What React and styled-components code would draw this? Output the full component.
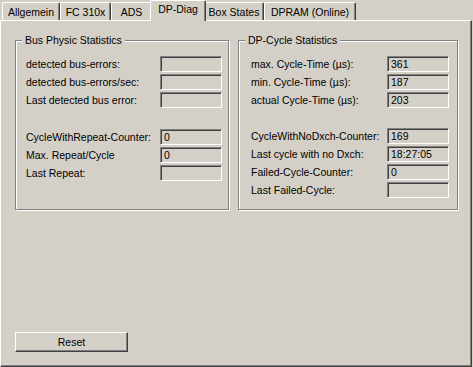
import React from 'react';
import styled, { createGlobalStyle } from 'styled-components';

const Global = createGlobalStyle`
  html, body { margin: 0; padding: 0; background: #d4d0c8; }
  body {
    font-family: "Liberation Sans", Arial, sans-serif;
    font-size: 10.5px;
    color: #000;
  }
`;

const Window = styled.div`
  width: 473px;
  height: 367px;
  display: flex;
  flex-direction: column;
  background: #d4d0c8;
`;

const TabStrip = styled.div`
  display: flex;
  align-items: flex-end;
  height: 20px;
  padding-left: 2px;
  position: relative;
  z-index: 1;
`;

const Tab = styled.div`
  box-sizing: border-box;
  flex: none;
  width: ${(p) => p.$w + (p.$active ? 4 : 0)}px;
  height: ${(p) => (p.$active ? '21px' : '18px')};
  margin: ${(p) => (p.$active ? '0 -2px -1px' : '0')};
  padding-top: ${(p) => (p.$active ? '1px' : '2px')};
  text-align: center;
  border-top: 1px solid #fff;
  border-left: 1px solid #fff;
  border-right: 1px solid #404040;
  box-shadow: inset -1px 0 #808080;
  border-radius: 2px 2px 0 0;
  background: #d4d0c8;
  line-height: 14px;
  white-space: nowrap;
  position: relative;
  z-index: ${(p) => (p.$active ? 2 : 1)};
`;

const Panel = styled.div`
  flex: 1;
  width: 472px;
  box-sizing: border-box;
  border-top: 1px solid #fff;
  border-left: 1px solid #fff;
  border-right: 1px solid #404040;
  border-bottom: 1px solid #404040;
  box-shadow: inset -1px -1px #808080;
  padding: 19px 0 0 14px;
  display: flex;
  flex-direction: column;
`;

const Groups = styled.div`
  display: flex;
  gap: 9px;
  align-items: flex-start;
`;

const Group = styled.div`
  position: relative;
  box-sizing: border-box;
  width: ${(p) => p.$w}px;
  height: 170px;
  border: 1px solid #808080;
  box-shadow: inset 1px 1px #fff, 1px 1px #fff;
  padding: 15px 0 0 ${(p) => p.$pl}px;
`;

const Legend = styled.div`
  position: absolute;
  top: -7px;
  left: 6px;
  padding: 0 3px;
  background: #d4d0c8;
  line-height: 13px;
  white-space: nowrap;
`;

const Fields = styled.div`
  display: grid;
  grid-template-columns: ${(p) => p.$label}px 62px;
  row-gap: 2px;
`;

const Label = styled.div`
  line-height: 16px;
  height: 16px;
  white-space: nowrap;
`;

const Field = styled.div`
  box-sizing: border-box;
  width: 62px;
  height: 16px;
  border: 1px solid;
  border-color: #808080 #fff #fff #808080;
  box-shadow: inset 1px 1px #404040, inset -1px -1px #d4d0c8;
  background: #d4d0c8;
  padding-left: 3px;
  line-height: 15px;
  white-space: nowrap;
  overflow: hidden;
`;

const Spacer = styled.div`
  grid-column: 1 / -1;
  height: ${(p) => p.$h}px;
`;

const Button = styled.button`
  box-sizing: border-box;
  margin-top: 122px;
  width: 113px;
  height: 20px;
  padding: 0;
  border: 1px solid;
  border-color: #fff #404040 #404040 #fff;
  box-shadow: inset -1px -1px #808080;
  background: #d4d0c8;
  font-family: "Liberation Sans", Arial, sans-serif;
  font-size: 10.5px;
  color: #000;
  line-height: 16px;
`;

const tabs = [
  ['Allgemein', 58],
  ['FC 310x', 51],
  ['ADS', 41],
  ['DP-Diag', 52],
  ['Box States', 60],
  ['DPRAM (Online)', 92],
];

const left = [
  [['detected bus-errors:', ''], ['detected bus-errors/sec:', ''], ['Last detected bus error:', '']],
  [['CycleWithRepeat-Counter:', '0'], ['Max. Repeat/Cycle', '0'], ['Last Repeat:', '']],
];

const right = [
  [['max. Cycle-Time (µs):', '361'], ['min. Cycle-Time (µs):', '187'], ['actual Cycle-Time (µs):', '203']],
  [
    ['CycleWithNoDxch-Counter:', '169'],
    ['Last cycle with no Dxch:', '18:27:05'],
    ['Failed-Cycle-Counter:', '0'],
    ['Last Failed-Cycle:', ''],
  ],
];

function Block({ rows }) {
  return rows.map(([l, v]) => (
    <React.Fragment key={l}>
      <Label>{l}</Label>
      <Field>{v}</Field>
    </React.Fragment>
  ));
}

function StatGroup({ title, w, pl, labelW, blocks, spacer }) {
  return (
    <Group $w={w} $pl={pl}>
      <Legend>{title}</Legend>
      <Fields $label={labelW}>
        <Block rows={blocks[0]} />
        <Spacer $h={spacer} />
        <Block rows={blocks[1]} />
      </Fields>
    </Group>
  );
}

export default function App() {
  return (
    <>
      <Global />
      <Window>
        <TabStrip>
          {tabs.map(([t, w]) => (
            <Tab key={t} $w={w} $active={t === 'DP-Diag'}>
              {t}
            </Tab>
          ))}
        </TabStrip>
        <Panel>
          <Groups>
            <StatGroup title="Bus Physic Statistics" w={214} pl={10} labelW={134} blocks={left} spacer={17} />
            <StatGroup title="DP-Cycle Statistics" w={220} pl={12} labelW={136} blocks={right} spacer={16} />
          </Groups>
          <Button>Reset</Button>
        </Panel>
      </Window>
    </>
  );
}
